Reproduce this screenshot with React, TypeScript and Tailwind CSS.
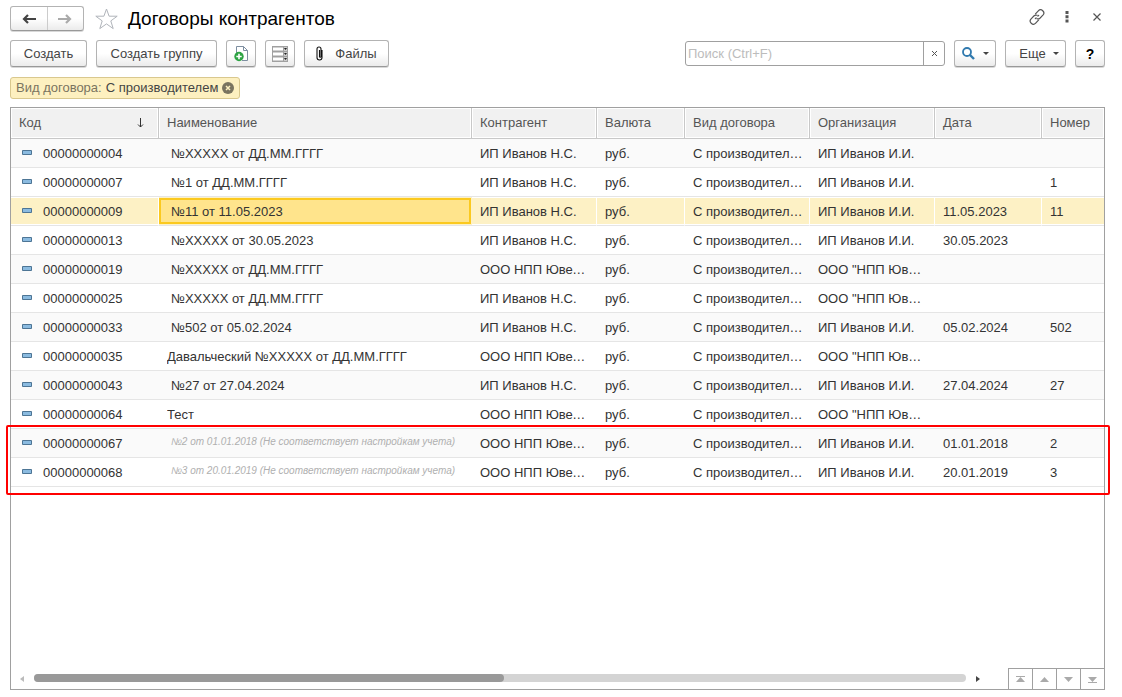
import { clsx } from "clsx";
import { useState } from "react";

type Contract = {
    code: string;
    name: string;
    partner: string;
    org: string;
    date?: string;
    number?: string;
    indent?: boolean;
    invalid?: boolean;
};

const IVANOV = "ИП Иванов Н.С.";
const UVELIR = "ООО НПП Ювелир";
const ORG_IP = "ИП Иванов И.И.";
const ORG_OOO = 'ООО "НПП Ювелир"';

const contracts: Contract[] = [
    { code: "00000000004", name: "№XXXXX от ДД.ММ.ГГГГ", partner: IVANOV, org: ORG_IP, indent: true },
    { code: "00000000007", name: "№1 от ДД.ММ.ГГГГ", partner: IVANOV, org: ORG_IP, number: "1", indent: true },
    { code: "00000000009", name: "№11 от 11.05.2023", partner: IVANOV, org: ORG_IP, date: "11.05.2023", number: "11", indent: true },
    { code: "00000000013", name: "№XXXXX от 30.05.2023", partner: IVANOV, org: ORG_IP, date: "30.05.2023", indent: true },
    { code: "00000000019", name: "№XXXXX от ДД.ММ.ГГГГ", partner: UVELIR, org: ORG_OOO, indent: true },
    { code: "00000000025", name: "№XXXXX от ДД.ММ.ГГГГ", partner: IVANOV, org: ORG_OOO, indent: true },
    { code: "00000000033", name: "№502 от 05.02.2024", partner: IVANOV, org: ORG_IP, date: "05.02.2024", number: "502", indent: true },
    { code: "00000000035", name: "Давальческий №XXXXX от ДД.ММ.ГГГГ", partner: UVELIR, org: ORG_OOO },
    { code: "00000000043", name: "№27 от 27.04.2024", partner: IVANOV, org: ORG_IP, date: "27.04.2024", number: "27", indent: true },
    { code: "00000000064", name: "Тест", partner: UVELIR, org: ORG_OOO },
    { code: "00000000067", name: "№2 от 01.01.2018 (Не соответствует настройкам учета)", partner: UVELIR, org: ORG_IP, date: "01.01.2018", number: "2", indent: true, invalid: true },
    { code: "00000000068", name: "№3 от 20.01.2019 (Не соответствует настройкам учета)", partner: UVELIR, org: ORG_IP, date: "20.01.2019", number: "3", indent: true, invalid: true },
];

const columns = [
    { title: "Код", width: "w-[148px]" },
    { title: "Наименование", width: "" },
    { title: "Контрагент", width: "w-[125px]" },
    { title: "Валюта", width: "w-[88px]" },
    { title: "Вид договора", width: "w-[125px]" },
    { title: "Организация", width: "w-[125px]" },
    { title: "Дата", width: "w-[107px]" },
    { title: "Номер", width: "w-[62px]" },
];

const button =
    "flex h-[27px] items-center justify-center rounded-[3px] border border-[#b3b3b3] border-b-[#999] bg-linear-to-b from-white from-50% to-[#ebebeb] text-[#444] shadow-[0_1px_0_#d8d8d8]";

function Arrow({ className }: { className?: string }) {
    return (
        <svg className={className} width="14" height="10" viewBox="0 0 14 10" fill="none" stroke="currentColor" strokeWidth="2.200">
            <path d="M14 5H2M6 1L2 5l4 4" />
        </svg>
    );
}

function Caret() {
    return (
        <svg width="6" height="3" viewBox="0 0 6 3" fill="#444">
            <path d="M0 0h6L3 3z" />
        </svg>
    );
}

function TitleBar() {
    return (
        <header className="flex h-[25px] items-center">
            <div className="flex h-[25px] w-[74px] rounded-[3px] border border-[#b3b3b3] border-b-[#999] bg-linear-to-b from-white from-50% to-[#ebebeb] shadow-[0_1px_0_#d8d8d8]">
                <button aria-label="Назад" className="flex flex-1 items-center justify-center border-r border-[#ccc] text-[#444]">
                    <Arrow />
                </button>
                <button aria-label="Вперед" className="flex flex-1 items-center justify-center text-[#aaa]">
                    <Arrow className="rotate-180" />
                </button>
            </div>
            <button aria-label="В избранное" className="ml-[11px]">
                <svg width="23" height="22" viewBox="0 0 23 22" fill="#fff" stroke="#b0b4ba">
                    <path d="M11.500 1l2.600 7.200h8.100l-6.400 4.700 2.400 7.700-6.700-4.700-6.700 4.700 2.400-7.700L.8 8.200h8.100z" />
                </svg>
            </button>
            <h1 className="ml-[10px] text-[19px] leading-[24px] text-black">Договоры контрагентов</h1>
            <div className="mb-[3px] ml-auto flex items-center text-[#555]">
                <button aria-label="Получить ссылку">
                    <svg width="16" height="16" viewBox="0 0 16 16" fill="none" stroke="currentColor" strokeWidth="1.200" strokeLinecap="round">
                        <path d="M6.500 4.800l2.800-2.900a3 3 0 0 1 4.600 4.300l-3 3a2.800 2.800 0 0 1-3 .5" />
                        <path d="M9.500 11.200l-2.800 2.900a3 3 0 0 1-4.600-4.300l3-3a2.800 2.800 0 0 1 3-.5" />
                        <path d="M6.300 9.700l.8-.8M8.900 7.100l.8-.8" />
                    </svg>
                </button>
                <button aria-label="Меню" className="ml-[20px]">
                    <svg width="4" height="12" viewBox="0 0 4 12" fill="currentColor">
                        <path d="M.5 0h3v3h-3zM.5 4.300h3v3h-3zM.5 8.600h3v3h-3z" />
                    </svg>
                </button>
                <button aria-label="Закрыть" className="mr-[4px] ml-[24px]">
                    <svg width="8" height="8" viewBox="0 0 8 8" stroke="currentColor" strokeWidth="1.200">
                        <path d="M.5.5l7 7M7.500.5l-7 7" />
                    </svg>
                </button>
            </div>
        </header>
    );
}

function Toolbar() {
    const [query, setQuery] = useState("");

    return (
        <div className="mt-[9px] flex items-center">
            <button className={clsx(button, "w-[77px]")}>Создать</button>
            <button className={clsx(button, "ml-[9px] w-[121px]")}>Создать группу</button>
            <button aria-label="Создать копированием" className={clsx(button, "ml-[9px] w-[30px]")}>
                <svg width="15" height="17" viewBox="0 0 15 17" fill="none">
                    <path d="M2.500 8V1.500h7l4 4v10H8" fill="#fff" stroke="#7d8ea0" />
                    <path d="M9.500 1.500v4h4" stroke="#7d8ea0" />
                    <circle cx="5" cy="11.500" r="4.700" fill="#2da343" />
                    <path d="M2.300 11.500h5.400M5 8.800v5.400" stroke="#fff" strokeWidth="1.600" />
                </svg>
            </button>
            <button aria-label="Режим просмотра" className={clsx(button, "ml-[9px] w-[30px]")}>
                <svg width="16" height="16" viewBox="0 0 16 16">
                    <path d="M0 0h16v16H0z" fill="#a0a0a0" />
                    <path d="M1 1.500h10v3H1zM1 6.500h10v3H1zM1 11.500h10v3H1z" fill="#fff" />
                    <path d="M12 1h3v4h-3zM12 6h3v4h-3zM12 11h3v4h-3z" fill="#ccc" />
                    <path d="M12 2h3l-1.500 2zM12 7h3l-1.500 2zM12 12h3l-1.500 2z" fill="#222" />
                </svg>
            </button>
            <button className={clsx(button, "ml-[9px] w-[85px] gap-[12px]")}>
                <svg width="7" height="15" viewBox="0 0 7 15" fill="none" stroke="#111" strokeWidth="1.100">
                    <path d="M3.500 4v6.500M1 10V3a2 2 0 0 1 4 0v7.500a.8.8 0 0 1-1.600 0M1 4v7.500a2.500 2.500 0 0 0 5 0V4" />
                </svg>
                Файлы
            </button>

            <div className="ml-auto flex h-[25px] w-[260px] rounded-[3px] border border-[#a0a0a0]">
                <input
                    type="text"
                    aria-label="Поиск"
                    placeholder="Поиск (Ctrl+F)"
                    value={query}
                    onChange={(e) => setQuery(e.target.value)}
                    className="min-w-0 flex-1 px-[2px] outline-none placeholder:text-[#bcbcbc]"
                />
                <button
                    aria-label="Очистить"
                    className="flex w-[21px] items-center justify-center border-l border-[#a0a0a0]"
                    onClick={() => setQuery("")}
                >
                    <svg width="5" height="5" viewBox="0 0 5 5" stroke="#555">
                        <path d="M0 0l5 5M5 0L0 5" />
                    </svg>
                </button>
            </div>
            <button aria-label="Найти" className={clsx(button, "ml-[9px] w-[42px] gap-[8px]")}>
                <svg width="13" height="13" viewBox="0 0 13 13" fill="none" stroke="#3079ae">
                    <circle cx="5" cy="5" r="4" strokeWidth="1.800" />
                    <path d="M8 8l4 4" strokeWidth="2.400" />
                </svg>
                <Caret />
            </button>
            <button className={clsx(button, "ml-[9px] w-[61px] gap-[7px] pl-[7px]")}>
                Еще
                <Caret />
            </button>
            <button aria-label="Справка" className={clsx(button, "ml-[9px] w-[30px]")}>
                <span className="text-[14px] font-bold text-black">?</span>
            </button>
        </div>
    );
}

function FilterChip() {
    return (
        <div className="mt-[10px] flex h-[22px] w-fit items-center rounded-[3px] border border-[#d9c88e] bg-[#fdf0c0] pr-[5px] pl-[5px]">
            <span className="text-[#7a745f]">Вид договора:</span>
            <span className="ml-[4px] text-[#444]">С производителем</span>
            <button aria-label="Снять отбор" className="ml-[4px]">
                <svg width="12" height="12" viewBox="0 0 12 12">
                    <circle cx="6" cy="6" r="6" fill="#7a745f" />
                    <path d="M4 4l4 4M8 4L4 8" stroke="#fdf0c0" strokeWidth="1.500" />
                </svg>
            </button>
        </div>
    );
}

function ContractRow({ item, selected, onSelect }: { item: Contract; selected: boolean; onSelect: () => void }) {
    const cell = clsx(
        "truncate border-b border-[#e5e5e5] pt-[2px] pl-[8px]",
        selected && "border-r border-r-white shadow-[inset_0_1px_0_#fff,inset_0_-1px_0_#fff] last:border-r-0",
    );

    return (
        <tr
            onClick={onSelect}
            className={clsx("h-[29px]", selected ? "bg-[#fdf1c5]" : "odd:bg-[#fafafa]")}
        >
            <td className={cell}>
                <div className="flex items-center gap-[11px] pl-[3px]">
                    <svg width="10" height="5" viewBox="0 0 10 5" className="mb-[3px]">
                        <path d="M.5.5h9v4h-9z" fill="#8bbbe0" stroke="#4d7595" />
                    </svg>
                    {item.code}
                </div>
            </td>
            {selected ? (
                <td className="border-b border-[#e5e5e5] py-px pr-px">
                    <div className="h-[26px] truncate border-2 border-[#fbc91f] bg-[#ffe48c] pt-[4px] pl-[10px]">{item.name}</div>
                </td>
            ) : (
                <td className={cell}>
                    <div
                        className={clsx(
                            "truncate",
                            item.indent && "pl-[4px]",
                            item.invalid && "pb-[4px] text-[10px] text-[#b0b0b0] italic",
                        )}
                    >
                        {item.name}
                    </div>
                </td>
            )}
            <td className={clsx(cell, "pr-[8px]")}>{item.partner}</td>
            <td className={clsx(cell, "pr-[8px]")}>руб.</td>
            <td className={clsx(cell, "pr-[6px]")}>С производителем</td>
            <td className={clsx(cell, "pr-[8px]")}>{item.org}</td>
            <td className={cell}>{item.date}</td>
            <td className={cell}>{item.number}</td>
        </tr>
    );
}

const pagers = [
    { label: "В начало", path: "M0 0h9v1H0zM4.500 1L9 6H0z" },
    { label: "Вверх", path: "M4.500 1L9 6H0z" },
    { label: "Вниз", path: "M0 1h9L4.500 6z" },
    { label: "В конец", path: "M0 1h9L4.500 6zM0 6h9v1H0z" },
];

function TableFooter() {
    return (
        <div className="mt-auto flex h-[21px] items-center">
            <button aria-label="Прокрутить влево" className="ml-[9px]">
                <svg width="4" height="6" viewBox="0 0 4 6" fill="#bbb">
                    <path d="M4 0v6L0 3z" />
                </svg>
            </button>
            <div className="mb-px ml-[10px] h-[8px] flex-1 rounded-full bg-[#d4d4d4]">
                <div className="h-[8px] w-[470px] max-w-full rounded-full bg-[#999]" />
            </div>
            <button aria-label="Прокрутить вправо" className="ml-[10px]">
                <svg width="4" height="6" viewBox="0 0 4 6" fill="#444">
                    <path d="M0 0v6l4-3z" />
                </svg>
            </button>
            <div className="ml-[28px] flex h-[21px] border-t border-[#a0a0a0]">
                {pagers.map((p) => (
                    <button key={p.label} aria-label={p.label} className="flex w-[24px] items-center justify-center border-l border-[#a0a0a0]">
                        <svg width="9" height="7" viewBox="0 0 9 7" fill="#aaa">
                            <path d={p.path} />
                        </svg>
                    </button>
                ))}
            </div>
        </div>
    );
}

function App() {
    const [selected, setSelected] = useState("00000000009");

    return (
        <div className="flex min-h-screen flex-col bg-white pt-[6px] pr-[17px] pb-[7px] pl-[10px] font-['Liberation_Sans',Arial,sans-serif] text-[13px] leading-[16px] text-[#333]">
            <TitleBar />
            <Toolbar />
            <FilterChip />

            <main className="relative mt-[8px] flex flex-1 flex-col border border-[#a0a0a0]">
                <table className="w-full table-fixed border-separate border-spacing-0">
                    <thead>
                        <tr className="h-[31px]">
                            {columns.map((col, i) => (
                                <th
                                    key={col.title}
                                    className={clsx(
                                        "border-r border-b border-[#c8c8c8] bg-[#f1f1f1] pr-[14px] pl-[8px] text-left font-normal text-[#555] shadow-[inset_0_0_0_1px_#fff] last:border-r-0 last:pr-0",
                                        col.width,
                                    )}
                                >
                                    <div className="flex items-center justify-between">
                                        {col.title}
                                        {i === 0 && (
                                            <svg width="7" height="10" viewBox="0 0 7 10" fill="none" stroke="#333">
                                                <path d="M3.500 0v9M1 6.500L3.500 9 6 6.500" />
                                            </svg>
                                        )}
                                    </div>
                                </th>
                            ))}
                        </tr>
                    </thead>
                    <tbody>
                        {contracts.map((item) => (
                            <ContractRow
                                key={item.code}
                                item={item}
                                selected={item.code === selected}
                                onSelect={() => setSelected(item.code)}
                            />
                        ))}
                    </tbody>
                </table>

                {/* Frame around the contracts that don't fit the accounting settings */}
                <div className="pointer-events-none absolute top-[317px] -right-[6px] -left-[5px] h-[70px] rounded-[2px] border-2 border-[#f00]" />

                <TableFooter />
            </main>
        </div>
    );
}

export default App;
